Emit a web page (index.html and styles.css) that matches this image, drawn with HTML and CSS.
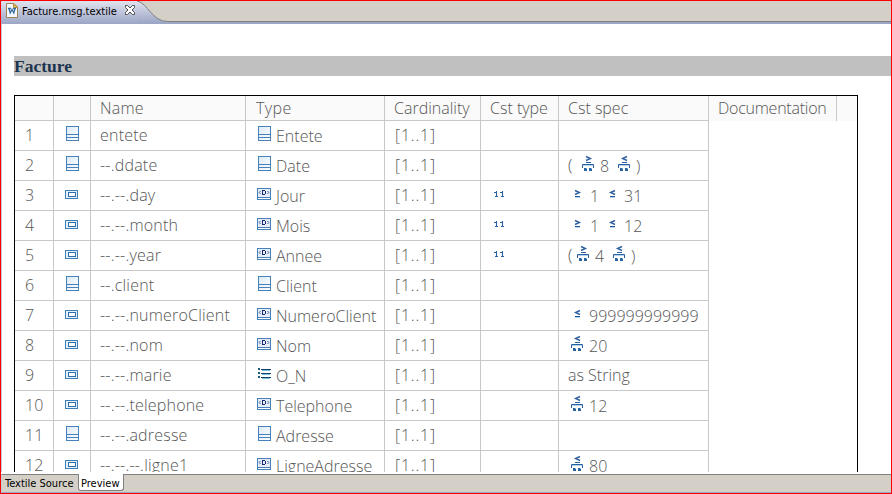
FILE: index.html
```html
<!DOCTYPE html>
<html lang="fr">
<head>
<meta charset="utf-8">
<title>Facture.msg.textile</title>
<link rel="stylesheet" href="styles.css">
</head>
<body>
<svg class="defs" width="0" height="0" aria-hidden="true">
<defs>
<linearGradient id="sky" x1="0" y1="0" x2="1" y2="1"><stop offset="0" stop-color="#dce9f5"/><stop offset="1" stop-color="#fff"/></linearGradient>
<symbol id="struct" viewBox="0 0 16 16"><rect x="2.5" y="1.5" width="12" height="14" fill="url(#sky)" stroke="#4681bb"/><path d="M2 9.5H15M2 12.5H15" stroke="#4681bb"/></symbol>
<symbol id="field" viewBox="0 0 16 16"><rect x="1.5" y="5.5" width="12" height="8" fill="#e6f1fb" stroke="#3d80b9"/><rect x="4.5" y="7.5" width="7" height="4" fill="#fff" stroke="#2d70ab"/></symbol>
<symbol id="datatype" viewBox="0 0 16 16"><rect x="1.5" y="3.5" width="13" height="11" fill="#e4edf8" stroke="#4681bb"/><path d="M2 12.5H14" stroke="#4681bb"/><path d="M2 13.5H14" stroke="#fff"/><path d="M6.5 5V10M6 5.5H9M6 9.5H9M9.5 6V9" stroke="#1c2b70"/><path d="M4.5 6L3.2 7.5L4.5 9M11.5 6L12.8 7.5L11.5 9" fill="none" stroke="#45669f"/></symbol>
<symbol id="enum" viewBox="0 0 16 16"><path d="M5 4.5H15M5 8.5H15M5 12.5H15" stroke="#143c6c"/><path d="M6 5.5H14M6 9.5H14M6 13.5H14" stroke="#70c5d8"/><path d="M2 3h2v2H2zM2 7h2v2H2zM2 11h2v2H2z" fill="#19577f"/></symbol>
<symbol id="ge" viewBox="0 0 16 16"><path d="M6 5.5L10.4 7.5L6 9.5" fill="none" stroke="#2e60a0" stroke-width="1.4"/><path d="M6 11.5H11" stroke="#1e579a"/><path d="M6 12.5H11" stroke="#b8d3ec"/></symbol>
<symbol id="le" viewBox="0 0 16 16"><path d="M11 5.5L6.6 7.5L11 9.5" fill="none" stroke="#2e60a0" stroke-width="1.4"/><path d="M6 11.5H11" stroke="#1e579a"/><path d="M6 12.5H11" stroke="#b8d3ec"/></symbol>
<symbol id="body" viewBox="0 0 16 16"><path d="M6 7.5H11" stroke="#2860a0"/><path d="M2.5 13V9.5H13.5V13" fill="none" stroke="#2860a0"/><path d="M3 10.5H13" stroke="#b5d2ee"/><path d="M4 13h3v3H4zM9 13h3v3H9z" fill="#2962a1"/><path d="M6 13h1v1H6zM11 13h1v1H11z" fill="#8bb8df"/></symbol>
<symbol id="gel" viewBox="0 0 16 16"><path d="M6 1.5L10.4 3.5L6 5.5" fill="none" stroke="#2e60a0" stroke-width="1.4"/><use href="#body"/></symbol>
<symbol id="lel" viewBox="0 0 16 16"><path d="M11 1.5L6.6 3.5L11 5.5" fill="none" stroke="#2e60a0" stroke-width="1.4"/><use href="#body"/></symbol>
<symbol id="digits" viewBox="0 0 16 16"><path d="M3 7.5H5M5.5 6V12M4 11.5H7M9 7.5H11M11.5 6V12M10 11.5H13" stroke="#2862a2" stroke-width="1.1"/></symbol>
</defs>
</svg>
<div class="editor">
  <header class="tabs">
    <div class="tab">
      <svg class="file" width="12" height="15" viewBox="0 0 12 15"><path d="M.5.5H8L11.5 4V14.5H.5z" fill="#f4f8ff" stroke="#9b8658"/><path d="M7.5.5V4.5H11.5z" fill="#e8bd56" stroke="#b99342"/><path d="M2 5.5H5M7 5.5H10M3 5.5L4.2 10L6 6.5L7.8 10L9 5.5" fill="none" stroke="#396f9f" stroke-width="1.3"/></svg>
      <span class="filename">Facture.msg.textile</span>
      <svg class="close" width="12" height="11" viewBox="0 0 12 11"><path d="M1.5.5H3.5L6 3L8.500 .5H10.500V2.500L8 5L10.500 7.500V9.500H8.500L6 7L3.500 9.500H1.500V7.500L4 5L1.500 2.500z" fill="#fff" stroke="#505050"/></svg>
    </div>
    <svg class="curve" width="34" height="22" viewBox="0 0 34 22"><path d="M0 0C11 2 15 21 31 20.500H34V0z" fill="#d4d0c8"/><path d="M0 0C11 2 15 21 31 20.500H34" fill="none" stroke="#808080"/></svg>
    <div class="rest"></div>
  </header>
  <main class="page">
    <h1>Facture</h1>
    <div class="table">
      <div class="row head"><div></div><div></div><div><span>Name</span></div><div><span>Type</span></div><div><span class="card">Cardinality</span></div><div><span>Cst type</span></div><div><span>Cst spec</span></div><div class="doc"><span>Documentation</span></div><div class="end"></div></div>
      <div class="row"><div>1</div><div><svg><use href="#struct"/></svg></div><div>entete</div><div><svg><use href="#struct"/></svg><span>Entete</span></div><div>[1..1]</div><div></div><div></div></div>
      <div class="row"><div>2</div><div><svg><use href="#struct"/></svg></div><div>--.ddate</div><div><svg><use href="#struct"/></svg><span>Date</span></div><div>[1..1]</div><div></div><div><span class="open">(</span><svg><use href="#gel"/></svg><span class="num">8</span><svg><use href="#lel"/></svg><span class="num">)</span></div></div>
      <div class="row"><div>3</div><div><svg><use href="#field"/></svg></div><div>--.--.day</div><div><svg><use href="#datatype"/></svg><span>Jour</span></div><div>[1..1]</div><div><svg><use href="#digits"/></svg></div><div><svg><use href="#ge"/></svg><span class="bound">1</span><svg><use href="#le"/></svg><span>31</span></div></div>
      <div class="row"><div>4</div><div><svg><use href="#field"/></svg></div><div>--.--.month</div><div><svg><use href="#datatype"/></svg><span>Mois</span></div><div>[1..1]</div><div><svg><use href="#digits"/></svg></div><div><svg><use href="#ge"/></svg><span class="bound">1</span><svg><use href="#le"/></svg><span>12</span></div></div>
      <div class="row"><div>5</div><div><svg><use href="#field"/></svg></div><div>--.--.year</div><div><svg><use href="#datatype"/></svg><span>Annee</span></div><div>[1..1]</div><div><svg><use href="#digits"/></svg></div><div><span class="open tight">(</span><svg><use href="#gel"/></svg><span class="num">4</span><svg><use href="#lel"/></svg><span class="num">)</span></div></div>
      <div class="row"><div>6</div><div><svg><use href="#struct"/></svg></div><div>--.client</div><div><svg><use href="#struct"/></svg><span>Client</span></div><div>[1..1]</div><div></div><div></div></div>
      <div class="row"><div>7</div><div><svg><use href="#field"/></svg></div><div>--.--.numeroClient</div><div><svg><use href="#datatype"/></svg><span>NumeroClient</span></div><div>[1..1]</div><div></div><div><svg><use href="#le"/></svg><span>999999999999</span></div></div>
      <div class="row"><div>8</div><div><svg><use href="#field"/></svg></div><div>--.--.nom</div><div><svg><use href="#datatype"/></svg><span>Nom</span></div><div>[1..1]</div><div></div><div><svg><use href="#lel"/></svg><span>20</span></div></div>
      <div class="row"><div>9</div><div><svg><use href="#field"/></svg></div><div>--.--.marie</div><div><svg><use href="#enum"/></svg><span>O_N</span></div><div>[1..1]</div><div></div><div>as String</div></div>
      <div class="row"><div>10</div><div><svg><use href="#field"/></svg></div><div>--.--.telephone</div><div><svg><use href="#datatype"/></svg><span>Telephone</span></div><div>[1..1]</div><div></div><div><svg><use href="#lel"/></svg><span>12</span></div></div>
      <div class="row"><div>11</div><div><svg><use href="#struct"/></svg></div><div>--.--.adresse</div><div><svg><use href="#struct"/></svg><span>Adresse</span></div><div>[1..1]</div><div></div><div></div></div>
      <div class="row"><div>12</div><div><svg><use href="#field"/></svg></div><div>--.--.--.ligne1</div><div><svg><use href="#datatype"/></svg><span>LigneAdresse</span></div><div>[1..1]</div><div></div><div><svg><use href="#lel"/></svg><span>80</span></div></div>
    </div>
  </main>
  <footer><span class="source">Textile Source</span><span class="preview">Preview</span></footer>
</div>
</body>
</html>
```
FILE: styles.css
```css
* { box-sizing: border-box; }
body { margin: 0; background: #fff; overflow: hidden; }
.defs { position: absolute; }
.editor { width: 892px; height: 494px; border: 1px solid red; display: flex; flex-direction: column; overflow: hidden; }
.tabs { height: 23px; flex: none; display: flex; background: #9ca7c8; font: 11px/14px "DejaVu Sans Condensed", "DejaVu Sans", sans-serif; color: #000; }
.tab { width: 136px; display: flex; background: linear-gradient(#e0e3ee, #9ca6c6); padding: 2px 0 0 5px; }
.file { flex: none; }
.filename { width: 95px; margin: 2px 0 0 4px; white-space: nowrap; }
.close { margin: 2px 0 0 7px; flex: none; }
.curve { flex: none; background: linear-gradient(#e0e3ee, #9ca6c6); }
.rest { flex: 1; height: 21px; background: #d4d0c8; border-bottom: 1px solid #808080; }
.page { height: 448px; flex: none; overflow: hidden; padding: 32px 0 0 12px; border-left: 1px solid #c9cbd2; background: #fff; }
h1 { height: 20px; margin: 0 0 19px; background: #c0c0c0; color: #1c344f; font: bold 17.5px/21px "Liberation Serif", serif; }
.table { width: 844px; height: 500px; border: 1px solid #000; color: #565656; font: 300 16px/28px "Open Sans", sans-serif; }
.row { display: grid; grid-template-columns: 39px 37px 155px 139px 96px 78px 150px 128px 20px; height: 30px; }
.row > div { display: flex; padding-left: 9px; border-right: 1px solid #c8c8c8; border-bottom: 1px solid #c8c8c8; white-space: nowrap; height: 30px; }
.row > div:nth-child(1) { padding-left: 10px; }
.row > div:nth-child(3) { letter-spacing: .2px; }
.row > div:nth-child(5) { letter-spacing: .8px; padding-left: 10px; }
.row svg { width: 16px; height: 16px; margin: 4px 4px 0 1px; flex: none; }
.row svg + span { position: relative; top: 1px; }
.row.head > div { height: 25px; line-height: 24px; background: #fafafa; }
.row.head > div:nth-child(4) { padding-left: 10px; letter-spacing: .4px; }
.row.head > div:nth-child(5) { padding-left: 9px; letter-spacing: 0; }
.head { height: 25px; }
.row.head .doc { border-bottom: 0; letter-spacing: -.25px; }
.row.head .end { border: 0; }
.open { width: 11px; }
.open.tight { width: 6px; }
.num { width: 15px; }
.bound { width: 14px; padding-left: 1px; }
footer { flex: 1; display: flex; margin-top: 2px; background: #d4d0c8; border-top: 1px solid #808080; border-bottom: 1px solid #9ca7c8; border-left: 1px solid #c9cbd2; font: 11px/15px "DejaVu Sans Condensed", "DejaVu Sans", sans-serif; color: #000; }
.source { width: 76px; padding: 1px 0 0 3px; white-space: nowrap; }
.preview { width: 46px; height: 17px; margin-top: -1px; padding: 2px 0 0 2px; background: #fff; border: 1px solid #808080; border-top: 0; border-radius: 0 0 3px 3px; }
```
